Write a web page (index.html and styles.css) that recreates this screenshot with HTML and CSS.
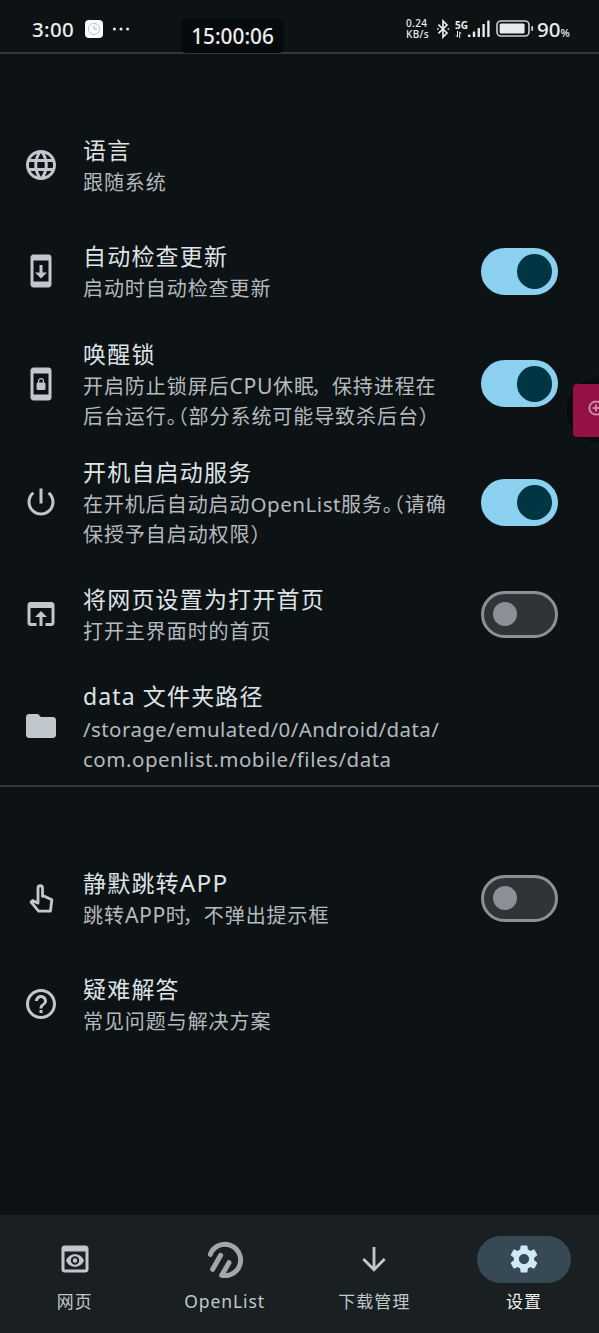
FILE: index.html
```html
<!DOCTYPE html>
<html lang="zh-CN">
<head>
<meta charset="utf-8">
<title>设置</title>
<link rel="stylesheet" href="styles.css">
</head>
<body>
<div class="screen">
  <header class="status">
    <span class="status-time">3:00</span>
    <svg class="status-app" viewBox="0 0 18 18"><rect width="18" height="18" rx="4" fill="#fbfbfb"/><circle cx="9" cy="9" r="5.6" fill="none" stroke="#c9c4c4" stroke-width="1"/><path d="M9 5.5V9h3" fill="none" stroke="#b5b0b0" stroke-width="1"/></svg>
    <svg class="status-dots" viewBox="0 0 18 4"><circle cx="2.4" cy="2" r="1.5"/><circle cx="9" cy="2" r="1.5"/><circle cx="15.6" cy="2" r="1.5"/></svg>
    <div class="status-right">
      <div class="net"><span>0.24</span><span>KB/s</span></div>
      <svg class="bt" viewBox="0 0 14 20" fill="none" stroke="#e8e9ea" stroke-width="1.7"><path d="M2.4 5.6 11 14 7 18V2l4 4-8.6 8.4"/><path d="M1 10h1.6M11.6 10h1.6"/></svg>
      <div class="cell">
        <span class="gen">5G</span>
        <svg class="updown" viewBox="0 0 7 7" fill="none" stroke="#e8e9ea" stroke-width="1"><path d="M2.500 0v6L.8 4.300M4.700 7V1l1.700 1.700"/></svg>
      </div>
      <svg class="signal" viewBox="0 0 22 18" fill="#e8e9ea"><rect x="0" y="14.500" width="2.400" height="2.500" rx=".6"/><rect x="4.800" y="11.500" width="2.400" height="5.500" rx=".6"/><rect x="9.600" y="8" width="2.400" height="9" rx=".6"/><rect x="14.400" y="4" width="2.400" height="13" rx=".6"/><rect x="19.200" y=".5" width="2.400" height="16.500" rx=".6"/></svg>
      <svg class="battery" viewBox="0 0 38 18"><rect x="1" y="1" width="32" height="15" rx="4" fill="none" stroke="#cfd0d1" stroke-width="1.600"/><rect x="3.600" y="3.600" width="25" height="9.800" rx="1.500" fill="#e8e9ea"/><rect x="35.300" y="6" width="1.800" height="5" rx=".9" fill="#cfd0d1"/></svg>
      <span class="pct">90<small>%</small></span>
    </div>
    <div class="clock-chip">15:00:06</div>
  </header>

  <main class="content">
    <section class="group">
      <div class="row">
        <svg class="icon" viewBox="0 0 24 24"><path d="M11.990 2C6.470 2 2 6.480 2 12s4.470 10 9.990 10C17.520 22 22 17.520 22 12S17.520 2 11.990 2zm6.930 6h-2.950c-.32-1.250-.78-2.450-1.380-3.560 1.840.63 3.370 1.910 4.330 3.560zM12 4.040c.83 1.200 1.480 2.530 1.910 3.960h-3.820c.43-1.430 1.080-2.760 1.910-3.960zM4.260 14C4.100 13.360 4 12.690 4 12s.1-1.360.26-2h3.380c-.08.66-.14 1.320-.14 2s.06 1.340.14 2H4.260zm.82 2h2.950c.32 1.250.78 2.450 1.380 3.560-1.840-.63-3.370-1.900-4.330-3.560zm2.950-8H5.080c.96-1.660 2.490-2.930 4.330-3.560C8.810 5.550 8.350 6.750 8.030 8zM12 19.960c-.83-1.200-1.480-2.530-1.910-3.960h3.820c-.43 1.430-1.080 2.760-1.910 3.960zM14.340 14H9.660c-.09-.66-.16-1.320-.16-2s.07-1.350.16-2h4.680c.09.65.16 1.320.16 2s-.07 1.340-.16 2zm.25 5.560c.6-1.110 1.060-2.310 1.380-3.560h2.950c-.96 1.650-2.490 2.930-4.330 3.560zM16.360 14c.08-.66.14-1.320.14-2s-.06-1.340-.14-2h3.380c.16.64.26 1.310.26 2s-.1 1.360-.26 2h-3.380z"/></svg>
        <div class="text"><h2>语言</h2><p>跟随系统</p></div>
      </div>
      <div class="row">
        <svg class="icon" viewBox="0 0 24 24"><path d="M17 1.010L7 1c-1.100 0-2 .9-2 2v18c0 1.100.9 2 2 2h10c1.100 0 2-.9 2-2V3c0-1.100-.9-1.990-2-1.990zM17 19H7V5h10v14zm-1-6h-3V8h-2v5H8l4 4 4-4z"/></svg>
        <div class="text"><h2>自动检查更新</h2><p>启动时自动检查更新</p></div>
        <span class="switch on"></span>
      </div>
      <div class="row tall wake">
        <svg class="icon" viewBox="0 0 24 24"><path d="M10 16h4c.55 0 1-.45 1-1v-3c0-.55-.45-1-1-1v-1c0-1.110-.9-2-2-2-1.110 0-2 .9-2 2v1c-.55 0-1 .45-1 1v3c0 .55.45 1 1 1zm.8-6c0-.66.54-1.200 1.200-1.200.66 0 1.200.54 1.200 1.200v1h-2.400v-1zM17 1H7c-1.100 0-2 .9-2 2v18c0 1.100.9 2 2 2h10c1.100 0 2-.9 2-2V3c0-1.100-.9-2-2-2zm0 18H7V5h10v14z"/></svg>
        <div class="text"><h2>唤醒锁</h2><p>开启防止锁屏后<span class="caps">CPU</span>休眠<span class="comma">，</span>保持进程在<br>后台运行<span class="half">。（</span>部分系统可能导致杀后台<span class="half">）</span></p></div>
        <span class="switch on"></span>
      </div>
      <div class="row tall">
        <svg class="icon" viewBox="0 0 24 24"><path d="M13 3h-2v10h2V3zm4.830 2.170l-1.420 1.420C17.990 7.860 19 9.810 19 12c0 3.870-3.130 7-7 7s-7-3.130-7-7c0-2.190 1.010-4.140 2.580-5.420L6.170 5.170C4.230 6.820 3 9.260 3 12c0 4.970 4.030 9 9 9s9-4.030 9-9c0-2.740-1.230-5.180-3.170-6.830z"/></svg>
        <div class="text"><h2>开机自启动服务</h2><p>在开机后自动启动<span class="word">OpenList</span>服务<span class="half">。（</span>请确<br>保授予自启动权限<span class="half">）</span></p></div>
        <span class="switch on"></span>
      </div>
      <div class="row">
        <svg class="icon" viewBox="0 0 24 24"><path d="M19 4H5c-1.110 0-2 .9-2 2v12c0 1.100.89 2 2 2h4v-2H5V8h14v10h-4v2h4c1.100 0 2-.9 2-2V6c0-1.100-.89-2-2-2zm-7 6l-4 4h3v6h2v-6h3l-4-4z"/></svg>
        <div class="text"><h2>将网页设置为打开首页</h2><p>打开主界面时的首页</p></div>
        <span class="switch"></span>
      </div>
      <div class="row tall">
        <svg class="icon" viewBox="0 0 24 24"><path d="M10 4H4c-1.100 0-1.990.9-1.990 2L2 18c0 1.100.9 2 2 2h16c1.100 0 2-.9 2-2V8c0-1.100-.9-2-2-2h-8l-2-2z"/></svg>
        <div class="text"><h2><span class="data">data </span>文件夹路径</h2><p class="path">/storage/emulated/0/Android/data/<br><span class="pkg">com.openlist.mobile/files/data</span></p></div>
      </div>
    </section>
    <section class="group">
      <div class="row">
        <svg class="icon" viewBox="0 0 24 24"><path d="M10 15.400V5.300a1.500 1.500 0 0 1 3 0v5.500h1.300l4.900 2.400-.9 7.500h-7.900l-5-6 1-1z" fill="none" stroke="#c0c7cd" stroke-width="1.900" stroke-linejoin="round"/></svg>
        <div class="text"><h2>静默跳转<span class="caps">APP</span></h2><p>跳转<span class="caps">APP</span>时<span class="comma">，</span>不弹出提示框</p></div>
        <span class="switch"></span>
      </div>
      <div class="row">
        <svg class="icon" viewBox="0 0 24 24"><path d="M11 18h2v-2h-2v2zm1-16C6.480 2 2 6.480 2 12s4.480 10 10 10 10-4.480 10-10S17.520 2 12 2zm0 18c-4.410 0-8-3.590-8-8s3.590-8 8-8 8 3.590 8 8-3.590 8-8 8zm0-14c-2.210 0-4 1.790-4 4h2c0-1.100.9-2 2-2s2 .9 2 2c0 2-3 1.750-3 5h2c0-2.250 3-2.500 3-5 0-2.210-1.790-4-4-4z"/></svg>
        <div class="text"><h2>疑难解答</h2><p>常见问题与解决方案</p></div>
      </div>
    </section>
  </main>

  <nav class="nav">
    <div class="tab"><span class="pill"><svg class="icon" viewBox="0 0 24 24"><path fill-rule="evenodd" d="M19 3H5c-1.110 0-2 .9-2 2v14c0 1.100.89 2 2 2h14c1.100 0 2-.9 2-2V5c0-1.100-.89-2-2-2zm0 16H5V7h14v12zM12 8.800c-2.730 0-5.060 1.660-6 4.200.94 2.540 3.270 4.200 6 4.200s5.060-1.660 6-4.200c-.94-2.540-3.270-4.200-6-4.200zm0 7a2.800 2.800 0 1 1 0-5.600 2.800 2.800 0 0 1 0 5.600zm0-1.300a1.500 1.500 0 1 0 0-3 1.500 1.500 0 0 0 0 3z"/></svg></span><span class="label">网页</span></div>
    <div class="tab"><span class="pill"><svg class="logo" viewBox="0 0 114 114" fill="none" stroke="#a3a7aa" stroke-width="15" stroke-linecap="round" stroke-linejoin="round"><path d="M13 43A47 47 0 1 1 47 106L69 68M44 46 20 88"/></svg></span><span class="label latin">OpenList</span></div>
    <div class="tab"><span class="pill"><svg class="icon" viewBox="0 0 24 24"><path d="M12 4v14.800M4.900 12l7.100 7.100 7.100-7.100" fill="none" stroke="#c0c7cd" stroke-width="1.900"/></svg></span><span class="label">下载管理</span></div>
    <div class="tab active"><span class="pill"><svg class="icon" viewBox="0 0 24 24"><path d="M19.140 12.940c.04-.3.06-.61.06-.94 0-.32-.02-.64-.07-.94l2.030-1.580c.18-.14.23-.41.12-.61l-1.920-3.320c-.12-.22-.37-.29-.59-.22l-2.390.96c-.5-.38-1.030-.7-1.620-.94l-.36-2.540c-.04-.24-.24-.41-.48-.41h-3.840c-.24 0-.43.17-.47.41l-.36 2.540c-.59.24-1.130.57-1.620.94l-2.390-.96c-.22-.08-.47 0-.59.22L2.740 8.870c-.12.21-.08.47.12.61l2.030 1.580c-.05.3-.09.63-.09.94s.02.64.07.94l-2.030 1.580c-.18.14-.23.41-.12.61l1.920 3.320c.12.22.37.29.59.22l2.390-.96c.5.38 1.030.7 1.620.94l.36 2.540c.05.24.24.41.48.41h3.840c.24 0 .44-.17.47-.41l.36-2.540c.59-.24 1.130-.56 1.620-.94l2.390.96c.22.08.47 0 .59-.22l1.920-3.320c.12-.22.07-.47-.12-.61l-2.010-1.580zM12 15.600c-1.980 0-3.600-1.620-3.600-3.600s1.620-3.600 3.600-3.600 3.600 1.620 3.600 3.600-1.620 3.600-3.600 3.600z"/></svg></span><span class="label">设置</span></div>
  </nav>

  <div class="floating"><div class="floating-face"><svg viewBox="0 0 16 16" fill="none" stroke="#c98aa5" stroke-width="2"><circle cx="8" cy="8" r="6.600"/><path d="M8 4.600v6.800M4.600 8h6.800"/></svg></div></div>
</div>
</body>
</html>
```

FILE: styles.css
```css
* { box-sizing: border-box; }
body { margin: 0; background: #0d1215; }
.screen {
  position: relative;
  display: flex;
  flex-direction: column;
  width: 599px;
  height: 1333px;
  overflow: hidden;
  background: #0d1215;
  color: #dfe3e6;
  font-family: "Noto Sans", "Noto Sans CJK SC", sans-serif;
}
h2, p { margin: 0; font-weight: 400; white-space: nowrap; }
svg { display: block; flex: none; }

/* status bar */
.status {
  position: relative;
  display: flex;
  align-items: center;
  height: 54px;
  flex: none;
  padding: 5px 27px 0 32px;
  border-bottom: 2px solid #33383b;
  color: #eceded;
}
.status-time { width: 53px; font-size: 20.500px; font-weight: 500; letter-spacing: .3px; }
.status-app { width: 18px; height: 18px; }
.status-dots { width: 18px; height: 4px; margin-left: 9px; fill: #eceded; }
.status-right { display: flex; align-items: center; margin-left: auto; }
.net { display: flex; flex-direction: column; width: 25px; font-size: 10px; line-height: 11px; font-weight: 500; letter-spacing: .35px; margin-right: 5px; white-space: nowrap; }
.bt { width: 14px; height: 20px; margin-right: 5px; }
.cell { display: flex; flex-direction: column; width: 13px; height: 18px; }
.gen { font-size: 10px; line-height: 10px; font-weight: 700; }
.updown { width: 7px; height: 7px; margin-top: 1px; }
.signal { width: 22px; height: 18px; margin-right: 6px; }
.battery { width: 38px; height: 18px; margin-right: 3px; }
.pct { width: 35px; font-size: 20.500px; font-weight: 500; white-space: nowrap; }
.pct small { font-size: 11px; }
.clock-chip {
  position: absolute;
  left: 181px;
  top: 19px;
  width: 103px;
  height: 34px;
  border-radius: 5px;
  background: #070a0c;
  font-size: 20.800px;
  line-height: 35px;
  font-weight: 500;
  text-align: center;
}

/* settings list */
.content { flex: 1; }
.group { padding-top: 58px; }
.group + .group { border-top: 2px solid #33383b; }
.row { display: flex; align-items: center; height: 106px; padding: 0 41px 0 23px; }
.row.tall { height: 118px; }
.row.wake { height: 119px; }
.icon { width: 36px; height: 36px; fill: #c0c7cd; }
.text { flex: 1; margin-left: 24px; padding-top: 2px; }
.wake .text { padding-top: 3px; }
h2 { padding-bottom: 2px; font-size: 23px; line-height: 32px; letter-spacing: 1.200px; color: #dfe3e6; }
p { font-size: 20px; line-height: 30px; letter-spacing: .930px; color: #b4babe; }
.caps { font-size: 1.060em; line-height: 1; letter-spacing: .6px; }
h2 .caps { letter-spacing: 1.200px; }
.word { font-size: 20.600px; line-height: 1; letter-spacing: .5px; }
.comma { margin: 0 4px 0 -4px; letter-spacing: -3px; }
.half { font-feature-settings: "halt"; }
.data { letter-spacing: 1.100px; }
.path { font-size: 20.500px; letter-spacing: .420px; }
.pkg { letter-spacing: .520px; }

.switch {
  position: relative;
  flex: none;
  width: 77px;
  height: 47px;
  border: 3px solid #8b9195;
  border-radius: 24px;
  background: #2f3437;
}
.switch::after {
  content: "";
  position: absolute;
  left: 9px;
  top: 8.500px;
  width: 24px;
  height: 24px;
  border-radius: 50%;
  background: #8b9097;
}
.switch.on { border-color: #8bd0ef; background: #8bd0ef; }
.switch.on::after { left: 32.500px; top: 3px; width: 35.500px; height: 35.500px; background: #003544; }

/* bottom navigation */
.nav { display: flex; flex: none; height: 118px; background: #1a1f22; }
.tab { flex: 1; display: flex; flex-direction: column; align-items: center; padding-top: 21px; }
.pill { display: flex; align-items: center; justify-content: center; width: 94px; height: 47px; border-radius: 24px; }
.label { margin-top: 5px; font-size: 16.900px; line-height: 28px; letter-spacing: 1.200px; color: #c0c7cd; }
.latin { margin-top: 4px; font-size: 17.500px; letter-spacing: .9px; }
.logo { width: 38px; height: 38px; margin-bottom: 1px; }
.tab:not(.active) .icon { margin-bottom: 1px; }
.active .pill { background: #364954; }
.active .icon { width: 34px; height: 34px; margin-bottom: 1px; fill: #cfe9f7; }
.active .label { color: #eef1f3; }

/* floating shortcut docked to the right edge */
.floating {
  position: absolute;
  left: 565px;
  top: 375px;
  width: 70px;
  height: 70px;
  border-radius: 50%;
  background: #090c0e;
  border: 1px solid #161a1d;
}
.floating-face {
  position: absolute;
  left: 7px;
  top: 8px;
  width: 53px;
  height: 53px;
  padding: 16px 0 0 15px;
  border-radius: 4px;
  background: #931145;
}
.floating-face svg { width: 16px; height: 16px; }
```
